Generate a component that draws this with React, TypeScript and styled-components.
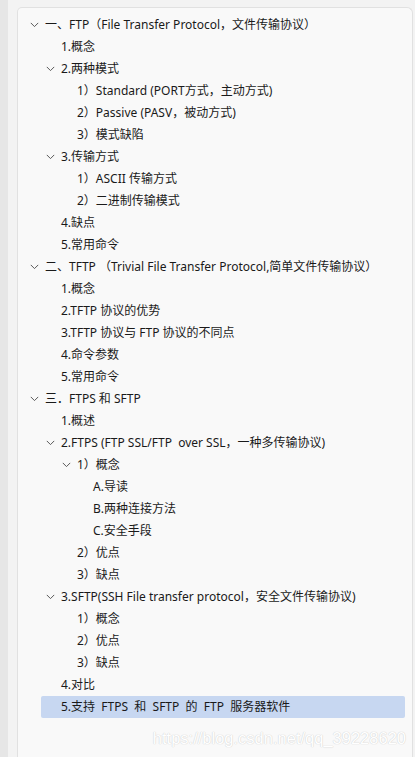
import React from "react";
import styled, { createGlobalStyle } from "styled-components";

const GlobalStyle = createGlobalStyle`
  html, body {
    margin: 0;
    padding: 0;
    height: 100%;
    background: #f3f3f3;
    overflow: hidden;
  }
  #root { height: 100%; }
`;

const Page = styled.div`
  display: flex;
  height: 757px;
  background: #f3f3f3;
`;

const SideStrip = styled.div`
  width: 8px;
  flex: none;
  background: #e6e6e6;
`;

const Panel = styled.div`
  position: relative;
  flex: 1;
  margin: 7px 2px 0 9px;
  border: 1px solid #e1e1e1;
  border-bottom: none;
  border-radius: 5px 6px 0 0;
  background: #f9f9f9;
  padding: 6px 7px 0 7px;
  font-family: "Noto Sans", "Noto Sans CJK SC", sans-serif;
  font-size: 12px;
  color: #1a1a1a;
`;

const List = styled.ul`
  list-style: none;
  margin: 0;
  padding: 0;
  display: flex;
  flex-direction: column;
`;

const Row = styled.li<{ $level: number; $selected?: boolean }>`
  display: flex;
  align-items: center;
  height: 22px;
  margin-left: ${(p) => p.$level * 16}px;
  padding-left: 5px;
  border-radius: 2px;
  background: ${(p) => (p.$selected ? "#c7d7f1" : "transparent")};
  white-space: pre;
`;

const ChevronSlot = styled.span`
  width: 15px;
  flex: none;
  display: flex;
  align-items: center;
`;

const Label = styled.span`
  line-height: 22px;
`;

const Watermark = styled.div`
  position: absolute;
  right: 6px;
  top: 721px;
  font-family: "Liberation Sans", Arial, sans-serif;
  font-size: 16.5px;
  color: #ffffff;
  text-shadow: 0 0 1px #cfcfcf, 0 0 1px #d6d6d6;
  white-space: nowrap;
`;

const Chevron = () => (
  <svg width="9" height="6" viewBox="0 0 9 6" fill="none">
    <path d="M0.8 0.9 L4.5 4.6 L8.2 0.9" stroke="#5a5a5a" strokeWidth="1" />
  </svg>
);

type Item = { level: number; text: string; open?: boolean; selected?: boolean };

const items: Item[] = [
  { level: 0, text: "一、FTP（File Transfer Protocol，文件传输协议）", open: true },
  { level: 1, text: "1.概念" },
  { level: 1, text: "2.两种模式", open: true },
  { level: 2, text: "1）Standard (PORT方式，主动方式)" },
  { level: 2, text: "2）Passive (PASV，被动方式)" },
  { level: 2, text: "3）模式缺陷" },
  { level: 1, text: "3.传输方式", open: true },
  { level: 2, text: "1）ASCII 传输方式" },
  { level: 2, text: "2）二进制传输模式" },
  { level: 1, text: "4.缺点" },
  { level: 1, text: "5.常用命令" },
  { level: 0, text: "二、TFTP （Trivial File Transfer Protocol,简单文件传输协议）", open: true },
  { level: 1, text: "1.概念" },
  { level: 1, text: "2.TFTP 协议的优势" },
  { level: 1, text: "3.TFTP 协议与 FTP 协议的不同点" },
  { level: 1, text: "4.命令参数" },
  { level: 1, text: "5.常用命令" },
  { level: 0, text: "三．FTPS 和 SFTP", open: true },
  { level: 1, text: "1.概述" },
  { level: 1, text: "2.FTPS (FTP SSL/FTP  over SSL，一种多传输协议)", open: true },
  { level: 2, text: "1）概念", open: true },
  { level: 3, text: "A.导读" },
  { level: 3, text: "B.两种连接方法" },
  { level: 3, text: "C.安全手段" },
  { level: 2, text: "2）优点" },
  { level: 2, text: "3）缺点" },
  { level: 1, text: "3.SFTP(SSH File transfer protocol，安全文件传输协议)", open: true },
  { level: 2, text: "1）概念" },
  { level: 2, text: "2）优点" },
  { level: 2, text: "3）缺点" },
  { level: 1, text: "4.对比" },
  { level: 1, text: "5.支持  FTPS  和  SFTP  的  FTP  服务器软件", selected: true },
];

export default function App() {
  return (
    <>
      <GlobalStyle />
      <Page>
        <SideStrip />
        <Panel>
          <List>
            {items.map((it, i) => (
              <Row key={i} $level={it.level} $selected={it.selected}>
                <ChevronSlot>{it.open ? <Chevron /> : null}</ChevronSlot>
                <Label>{it.text}</Label>
              </Row>
            ))}
          </List>
          <Watermark>https://blog.csdn.net/qq_39228620</Watermark>
        </Panel>
      </Page>
    </>
  );
}
